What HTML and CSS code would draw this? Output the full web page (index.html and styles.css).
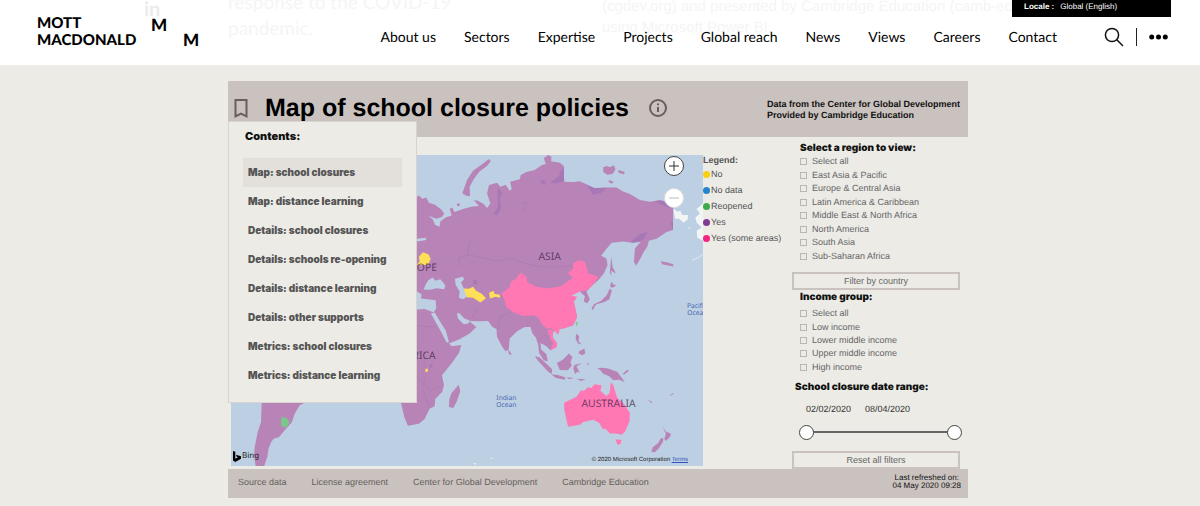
FILE: index.html
```html
<!DOCTYPE html>
<html lang="en">
<head>
<meta charset="utf-8">
<title>Map of school closure policies</title>
<link rel="stylesheet" href="styles.css">
</head>
<body>
<header class="site-header">
  <div class="faded faded-share">in</div>
  <p class="faded faded-intro">response to the COVID-19<br>pandemic.</p>
  <p class="faded faded-source">(cgdev.org) and presented by Cambridge Education (camb-ed<br>using Microsoft Power BI.</p>
  <a class="logo" href="#"><span class="logo-name">MOTT<br>MACDONALD</span><span class="logo-m">M</span><span class="logo-m low">M</span></a>
  <nav class="main-nav">
    <a href="#">About us</a><a href="#">Sectors</a><a href="#">Expertise</a><a href="#">Projects</a><a href="#">Global reach</a><a href="#">News</a><a href="#">Views</a><a href="#">Careers</a><a href="#">Contact</a>
  </nav>
  <div class="tools">
    <button class="icon-button" aria-label="Search"><svg width="20" height="20" viewBox="0 0 20 20"><circle cx="8" cy="8" r="6.6"/><path d="M12.8 12.8 19 19"/></svg></button>
    <span class="divider"></span>
    <button class="icon-button dots" aria-label="More"><svg width="19" height="6" viewBox="0 0 19 6"><circle cx="2.7" cy="3" r="2.5"/><circle cx="9.5" cy="3" r="2.5"/><circle cx="16.3" cy="3" r="2.5"/></svg></button>
  </div>
  <a class="locale" href="#"><b>Locale :</b><span>Global (English)</span></a>
</header>

<main class="page">
<section class="dashboard">
  <div class="title-bar">
    <button class="icon-button" aria-label="Contents"><svg class="bookmark" width="14" height="19" viewBox="0 0 14 19"><path d="M1.5 1h11v16.3L7 14.5l-5.500 2.800z"/></svg></button>
    <h1>Map of school closure policies</h1>
    <button class="icon-button" aria-label="Information"><svg class="info" width="18" height="18" viewBox="0 0 18 18"><circle cx="9" cy="9" r="8"/><path d="M9 8v5M9 4.600v1.700"/></svg></button>
    <p class="credit">Data from the Center for Global Development<br>Provided by Cambridge Education</p>
  </div>

  <aside class="contents">
    <h2>Contents:</h2>
    <button class="active">Map: school closures</button>
    <button>Map: distance learning</button>
    <button>Details: school closures</button>
    <button>Details: schools re-opening</button>
    <button>Details: distance learning</button>
    <button>Details: other supports</button>
    <button>Metrics: school closures</button>
    <button>Metrics: distance learning</button>
  </aside>

  <div class="report">
    <div class="map">
      <svg class="map-art" viewBox="-535 15 1414 933" role="img" aria-label="World map of school closures">
        <rect class="sea" x="-535" y="15" width="1414" height="933"/>
        <g class="yes">
          <path d="M-60 140L20 142L28 136L38 146L50 142L58 158L75 163L95 178L104 190L98 200L80 206L66 201L56 196L70 208L76 224L90 230L92 214L108 202L126 196L120 176L128 172L134 186L152 180L165 175L188 169L208 168L192 150L205 152L222 162L232 174L242 160L232 130L238 105L262 98L272 110L288 104L300 122L306 116L301 95L330 88L333 75L350 66L375 60L395 46L408 42L402 25L415 15L425 20L424 34L450 38L462 48L463 95L490 96L510 94L535 105L545 118L565 121L590 112L620 112L640 124L660 132L690 150L720 155L750 150L790 165L789 240L770 246L740 266L717 272L712 290L700 308L690 328L678 347L672 335L675 295L692 276L665 278L640 274L606 278L590 296L574 317L590 325L593 345L582 370L565 390L548 405L530 424L540 448L532 459L522 454L525 438L510 424L485 437L502 440L492 455L502 500L490 525L465 533L445 538L430 545L428 560L441 578L440 590L422 600L410 588L392 578L394 598L410 612L414 634L402 630L388 608L385 582L378 562L368 550L362 530L345 530L322 543L300 565L297 598L287 603L278 590L262 560L260 536L248 530L235 512L205 513L178 512L200 530L180 550L150 567L118 580L126 588L155 584L148 608L125 640L97 675L103 705L98 724L77 746L75 768L60 775L45 806L28 820L-5 826L-16 800L-25 760L-60 650Z"/>
          <path d="M158 130L172 90L190 62L210 48L238 27L243 34L232 48L210 64L192 88L180 110L181 138L172 138Z"/>
          <path d="M580 52L592 48L600 52L612 46L617 58L608 72L592 74L580 66ZM625 60L645 66L642 73L626 68ZM597 90L611 95L606 101L597 97ZM142 160L150 160L150 168L142 168Z"/>
          <path d="M604 320L608 350L618 370L604 362L605 377L600 368L602 340ZM604 395L612 404L620 405L608 413L601 410ZM600 415L606 422L598 448L582 456L562 461L548 472L552 462L574 452L590 436ZM545 470L555 467L549 481ZM753 333L770 336L790 342L790 349L756 342Z"/>
          <path d="M296 597L306 612L300 614L296 606ZM375 617L390 622L410 640L427 657L426 671L416 665L400 648L384 631ZM424 672L444 674L466 681L466 688L438 683ZM470 681L492 683L478 687ZM500 685L528 687L514 692ZM441 638L460 628L477 610L488 620L482 635L486 646L474 660L450 659ZM494 644L517 638L500 648L510 668L502 664L496 672L490 654ZM500 550L508 558L506 574L516 582L504 580L497 564ZM508 603L524 595L526 610L517 615L506 609ZM552 647L562 654L573 652L592 654L622 664L634 680L645 696L628 688L610 690L598 678L580 670L570 658ZM637 672L652 658L657 662L644 672ZM532 637L538 640L534 646ZM712 746L728 756L724 758ZM778 736L790 727L790 732L780 736Z"/>
          <path d="M147 703L152 722L141 754L131 773L118 770L119 747L125 729ZM757 828L768 843L783 850L781 858L768 872L763 866L768 850ZM760 863L759 875L746 894L734 906L724 903L729 890L745 878L752 864Z"/>
          <path d="M-443 750L-445 815L-455 845L-464 890L-466 912L-461 948L-436 948L-426 918L-422 893L-414 874L-407 865L-391 860L-376 842L-353 816L-345 792L-329 765L-300 750Z"/>
        </g>
        <g class="shade">
          <path d="M463 94L436 101L422 97L448 78L452 62L462 50ZM532 104L554 114L590 112L575 128L548 134ZM662 276L690 252L714 244L700 270L670 278ZM734 155L756 151L789 165L786 176L760 166ZM264 112L278 128L270 145L274 176L262 196L252 190L265 170ZM390 93L404 90L410 105L398 101ZM782 218L789 215L789 240ZM192 387L203 392L201 404L190 402ZM60 644L70 640L68 650L60 655Z"/>
          <path class="lines" d="M147 350L150 322L180 315L218 322L260 333L300 325L340 338L390 350L442 350L486 348M172 315L180 275M335 186L350 165M335 160L357 158M22 527L80 530M22 600L45 625L50 665L40 710M85 520L105 550M186 505L205 470M264 540L272 500L300 487M350 528L370 500M385 572L402 555L418 558M22 680L60 720L92 710M40 720L60 770"/>
        </g>
        <path class="sea" d="M136 386L160 380L163 388L154 397L165 420L172 440L160 447L148 443L150 424L138 404ZM48 404L56 390L70 382L76 392L92 387L107 405L104 417L80 414L62 419L42 418ZM22 424L36 432L34 445L78 450L80 475L72 486L45 476L22 478ZM64 490L75 487L90 512L108 540L118 575L111 577L94 544L78 515ZM142 488L150 490L164 505L180 511L176 520L162 522L145 505ZM22 266L48 263L50 270L22 274ZM485 437L500 425L512 424L504 433L518 448L506 450Z"/>
        <path class="some" d="M275 430L300 412L303 395L320 385L332 367L350 380L352 395L380 410L415 415L455 408L470 396L490 382L474 369L490 356L490 340L505 330L525 335L535 370L565 380L556 395L548 405L530 420L510 424L485 437L502 440L492 455L502 500L490 525L465 533L445 538L440 545L425 535L410 535L395 520L388 502L370 495L340 497L310 485L290 470L285 450ZM412 540L430 538L428 560L441 578L440 590L422 601L430 580L420 560ZM437 540L450 538L446 552L438 548Z"/>
        <path class="some" d="M463 757L500 739L514 720L522 722L535 710L544 714L554 702L575 705L572 722L590 737L599 728L603 695L610 704L615 720L622 742L642 760L660 788L659 812L645 845L635 853L618 849L600 849L586 834L580 837L568 818L550 808L520 815L510 823L475 829L470 810L463 775ZM617 867L635 868L632 881L623 883Z"/>
        <path class="no" d="M22 345L30 334L28 320L40 306L57 313L63 326L56 344ZM162 415L178 416L190 410L199 422L216 431L229 444L212 457L190 443L171 441ZM238 428L252 422L254 431L270 434L272 443L257 440L241 445ZM47 655L55 655L54 664L48 666Z"/>
        <path class="reopened" d="M-384 800L-370 802L-359 815L-370 832L-385 826ZM498 515L505 516L499 530Z"/>
        <path class="blank" d="M790 175L802 185L811 182L817 195L834 195L833 208L821 218L808 207L795 205ZM856 202L870 190L860 177L879 160L879 272L862 263L860 242L875 232L860 217ZM835 230L842 234L837 236ZM190 940L200 938L198 943ZM240 922L250 923L246 926Z"/>
        <path class="islands" d="M846 330Q866 324 879 313"/>
        <g class="continent">
          <text x="386" y="329">ASIA</text>
          <text x="82" y="363" text-anchor="end">EUROPE</text>
          <text x="78" y="627" text-anchor="end">AFRICA</text>
          <text x="515" y="770">AUSTRALIA</text>
        </g>
        <g class="ocean">
          <text x="260" y="749">Indian</text><text x="260" y="771">Ocean</text>
          <text x="831" y="472">Pacific</text><text x="832" y="494">Ocean</text>
        </g>
      </svg>
      <div class="zoom">
        <button aria-label="Zoom in"><svg width="12" height="12" viewBox="0 0 12 12"><path d="M6 1v10M1 6h10"/></svg></button>
        <button class="off" aria-label="Zoom out"><svg width="12" height="12" viewBox="0 0 12 12"><path d="M1 6h10"/></svg></button>
      </div>
      <div class="bing"><svg width="8" height="11" viewBox="0 0 8 11"><path d="M0 0l2.300.8v7L5 6.300 3.700 5.700 3 3.700 8 5.300v2.500L2.300 11 0 9.600z"/></svg>Bing</div>
      <div class="copyright">© 2020 Microsoft Corporation <a href="#">Terms</a></div>
    </div>

    <div class="legend">
      <h3>Legend:</h3>
      <ul>
        <li><i class="dot yellow"></i>No</li>
        <li><i class="dot blue"></i>No data</li>
        <li><i class="dot green"></i>Reopened</li>
        <li><i class="dot purple"></i>Yes</li>
        <li><i class="dot pink"></i>Yes (some areas)</li>
      </ul>
    </div>

    <form class="filters">
      <fieldset>
        <legend>Select a region to view:</legend>
        <div class="checks eight">
          <label><input type="checkbox">Select all</label>
          <label><input type="checkbox">East Asia &amp; Pacific</label>
          <label><input type="checkbox">Europe &amp; Central Asia</label>
          <label><input type="checkbox">Latin America &amp; Caribbean</label>
          <label><input type="checkbox">Middle East &amp; North Africa</label>
          <label><input type="checkbox">North America</label>
          <label><input type="checkbox">South Asia</label>
          <label><input type="checkbox">Sub-Saharan Africa</label>
        </div>
      </fieldset>
      <button class="outline" type="button">Filter by country</button>
      <fieldset>
        <legend>Income group:</legend>
        <div class="checks five">
          <label><input type="checkbox">Select all</label>
          <label><input type="checkbox">Low income</label>
          <label><input type="checkbox">Lower middle income</label>
          <label><input type="checkbox">Upper middle income</label>
          <label><input type="checkbox">High income</label>
        </div>
      </fieldset>
      <fieldset class="dates">
        <legend>School closure date range:</legend>
        <div class="date-values"><span>02/02/2020</span><span>08/04/2020</span></div>
        <div class="range">
          <input type="range" aria-label="Start date" min="0" max="66" value="0">
          <input type="range" aria-label="End date" min="0" max="66" value="66">
        </div>
      </fieldset>
      <button class="outline" type="reset">Reset all filters</button>
    </form>
  </div>

  <footer class="footer">
    <a href="#">Source data</a><a href="#">License agreement</a><a href="#">Center for Global Development</a><a href="#">Cambridge Education</a>
    <p>Last refreshed on:<br>04 May 2020 09:28</p>
  </footer>
</section>
</main>
</body>
</html>
```

FILE: styles.css
```css
* { box-sizing: border-box; }
body {
  margin: 0;
  background: #ecebe6;
  font-family: "Liberation Sans", Arial, sans-serif;
  font-size: 9px;
  color: #555;
  text-rendering: geometricPrecision;
}
h1, h2, h3, p, ul, fieldset { margin: 0; padding: 0; border: 0; }
ul { list-style: none; }
a { color: inherit; text-decoration: none; }
button { font: inherit; color: inherit; border: 0; background: none; padding: 0; cursor: pointer; }
svg { display: block; }

/* Site header */
.site-header {
  position: relative;
  display: flex;
  align-items: flex-start;
  min-height: 65px;
  padding: 0 32px 0 37px;
  background: #fff;
  color: #000;
  overflow: hidden;
}
.faded { position: absolute; color: #f5f5f5; white-space: nowrap; font-family: Lato, sans-serif; }
.faded-share { left: 144px; top: -3px; font: bold 20px/24px Lato, sans-serif; color: #ececec; }
.faded-intro { left: 228px; top: -10px; font-size: 19px; line-height: 26px; }
.faded-source { left: 602px; top: -4px; font: 15px/21px "Liberation Sans", sans-serif; }
.logo { position: relative; display: flex; font-family: Lato, sans-serif; font-weight: 900; }
.logo-name { width: 114px; padding-top: 15px; font-size: 15px; line-height: 17px; }
.logo-m { width: 32px; padding-top: 14px; font-size: 17px; line-height: 22px; }
.logo-m.low { padding-top: 29px; }
.main-nav {
  position: relative;
  display: flex;
  gap: 28px;
  margin-left: auto;
  padding-top: 27px;
  font: 14px/20px Lato, sans-serif;
  white-space: nowrap;
}
.tools { position: relative; display: flex; align-items: center; margin-left: 47px; padding-top: 27px; }
.icon-button svg { fill: none; stroke: #111; stroke-width: 1.5; }
.divider { width: 1px; height: 18px; margin: 0 12px; background: #222; }
.dots svg { fill: #000; stroke: none; }
.locale {
  position: absolute;
  top: 0;
  right: 29px;
  display: flex;
  gap: 6px;
  width: 159px;
  padding: 0 12px 3px;
  background: #000;
  color: #fff;
  font-size: 8px;
  line-height: 14px;
}

/* Dashboard */
.page { padding: 16px 4px 8px 0; }
.dashboard { position: relative; max-width: 740px; margin: 0 auto; }
.title-bar {
  display: flex;
  align-items: center;
  min-height: 56px;
  padding: 0 8px 2px 6px;
  background: #cac2bf;
}
.title-bar .bookmark, .title-bar .info { stroke: #665f5d; stroke-width: 2; }
h1 { margin: 0 20px 0 17px; color: #000; font-size: 25px; line-height: 30px; white-space: nowrap; }
.credit { margin-left: auto; padding-top: 3px; color: #111; font-size: 9px; line-height: 11px; font-weight: bold; white-space: nowrap; }

.contents {
  position: absolute;
  z-index: 2;
  top: 40px;
  left: 0;
  width: 189px;
  padding: 7px 14px 12px 14px;
  background: #ecebe6;
  border: 1px solid #d8d4cd;
  font-family: Inter, sans-serif;
  font-weight: 900;
}
.contents h2 { font: 900 11px/14px Inter, sans-serif; color: #111; }
.filters legend { font: 900 10px/14px Inter, sans-serif; color: #111; }
.contents h2 { margin: 0 0 15px 2px; }
.contents button { display: block; width: 100%; padding-left: 5px; font-size: 10px; line-height: 29px; text-align: left; }
.contents .active { background: #e3e0dc; }

.report { display: grid; grid-template-columns: 472px 89px 1fr; padding-left: 3px; }
.map { position: relative; align-self: start; margin-top: 18px; }
.map-art { width: 100%; height: auto; font-family: "Noto Sans", sans-serif; }
.sea { fill: #bdd0e3; }
.yes { fill: #b884b7; }
.shade { fill: #a878b6; }
.lines { fill: none; stroke: #a87aad; stroke-width: 2; }
.some { fill: #ff78b4; }
.no { fill: #ffdf58; }
.reopened { fill: #78c98a; }
.blank { fill: #f3f4f4; }
.islands { fill: none; stroke: #dfe6ec; stroke-width: 3; }
.continent { font-size: 31px; fill: #3c2448; fill-opacity: .75; }
.ocean { font-size: 20px; fill: #4b68b0; }
.zoom { position: absolute; top: 1px; right: 19px; display: grid; gap: 12px; }
.zoom button {
  display: grid;
  place-items: center;
  width: 20px;
  height: 20px;
  border: 1px solid #444;
  border-radius: 50%;
  background: #fff;
}
.zoom svg { stroke: #333; }
.zoom .off { border-color: #ddd; }
.zoom .off svg { stroke: #bbb; }
.bing { position: absolute; left: 2px; bottom: 4px; display: flex; align-items: center; gap: 1px; color: #222; font: 8px/12px "Noto Sans", sans-serif; }
.copyright { position: absolute; right: 15px; bottom: 1px; color: #222; font-size: 6px; line-height: 9px; }
.copyright a { color: #3355bb; text-decoration: underline; }

.legend { margin-top: 18px; white-space: nowrap; }
.legend h3 { font-size: 9px; line-height: 11px; }
.legend li { display: flex; align-items: center; gap: 1px; height: 16px; }
.dot { width: 7px; height: 7px; border-radius: 50%; }
.yellow { background: #f7d010; }
.blue { background: #2584cb; }
.green { background: #3faa4d; }
.purple { background: #7d3c91; }
.pink { background: #f32386; }

.filters { padding: 4px 8px 0 0; }
.filters fieldset { padding-left: 8px; min-width: 0; }
.filters legend { padding: 0; white-space: nowrap; }
.checks { display: grid; grid-auto-rows: 1fr; color: #666; }
.checks.eight { min-height: 108px; margin-bottom: 9px; }
.checks.five { min-height: 67px; margin-bottom: 6px; }
.checks label { display: flex; align-items: center; gap: 5px; line-height: 13px; white-space: nowrap; }
.checks input { appearance: none; width: 7px; height: 7px; margin: 0; border: 1px solid #bbb6b2; }
.outline {
  display: block;
  width: 100%;
  height: 18px;
  border: 2px solid #cac2bf;
  line-height: 14px;
  color: #666;
}
.outline + fieldset { padding-top: 3px; }
.filters .dates { padding-left: 3px; }
.date-values { display: flex; gap: 14px; margin: 9px 0 9px 11px; color: #333; line-height: 12px; }
.range { position: relative; height: 16px; margin: 0 -2px 11px 4px; }
.range::before { content: ""; position: absolute; top: 7px; left: 8px; right: 8px; height: 2px; background: #666; }
.range input { position: absolute; top: 0; left: 0; width: 100%; height: 16px; margin: 0; appearance: none; background: none; pointer-events: none; }
.range input::-webkit-slider-thumb {
  appearance: none;
  width: 15px;
  height: 15px;
  border: 1px solid #444;
  border-radius: 50%;
  background: #fff;
  pointer-events: auto;
}

.footer {
  display: flex;
  align-items: center;
  gap: 25px;
  min-height: 29px;
  padding: 0 7px 3px 10px;
  background: #cac2bf;
  color: #665f5d;
}
.footer p { margin-left: auto; color: #111; font-size: 8px; line-height: 8px; text-align: center; }
```
